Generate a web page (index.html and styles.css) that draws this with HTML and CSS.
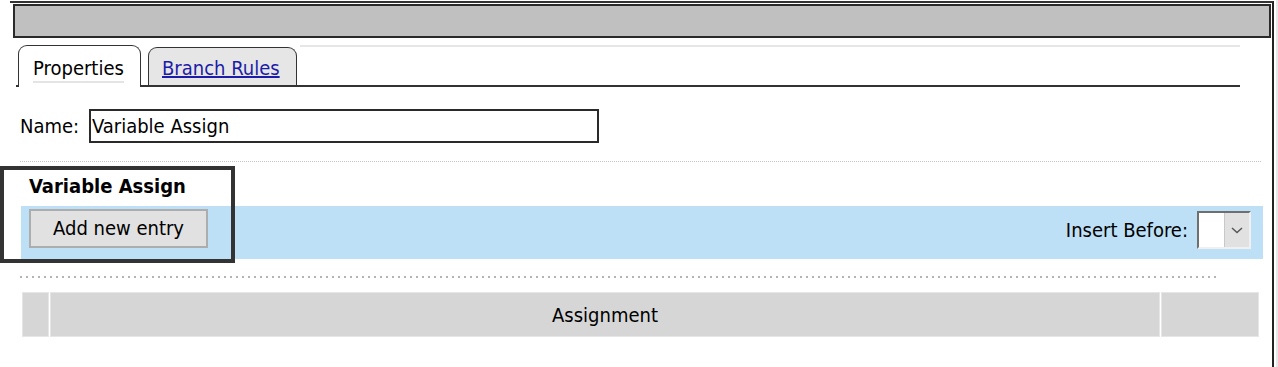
FILE: index.html
```html
<!DOCTYPE html>
<html>
<head>
<meta charset="utf-8">
<link rel="stylesheet" href="styles.css">
</head>
<body>
<div class="page">
  <div class="titlebar"></div>
  <div class="content">
    <div class="tabs">
      <div class="tab active"><span class="tab-label">Properties</span></div>
      <div class="tab"><a class="tab-link" href="#">Branch Rules</a></div>
      <div class="tab-fill"></div>
    </div>
    <div class="name-row">
      <label class="name-label">Name:</label>
      <div class="name-input">Variable Assign</div>
    </div>
    <div class="sep-fine"></div>
    <div class="section-title">Variable Assign</div>
    <div class="toolbar">
      <div class="btn">Add new entry</div>
      <div class="toolbar-right">
        <span class="insert-label">Insert Before:</span>
        <div class="select">
          <div class="select-value"></div>
          <div class="select-btn">
            <svg width="14" height="10" viewBox="0 0 14 10"><path d="M2 3 L7 7.5 L12 3" fill="none" stroke="#555" stroke-width="1.4"/></svg>
          </div>
        </div>
      </div>
    </div>
    <div class="sep-dots"></div>
    <div class="grid-head">
      <div class="cell c1"></div>
      <div class="cell c2">Assignment</div>
      <div class="cell c3"></div>
    </div>
  </div>
  <div class="highlight"></div>
</div>
<div class="edge"></div>
</body>
</html>
```
FILE: styles.css
```css
html, body {
  margin: 0;
  padding: 0;
  background: #fff;
  width: 1278px;
  height: 367px;
  overflow: hidden;
}
body {
  font-family: "DejaVu Sans Condensed", "DejaVu Sans", sans-serif;
  font-size: 20px;
  color: #000;
  position: relative;
}
.page {
  margin: 1px 0 0 10px;
  width: 1264px;
  height: 366px;
  border-top: 2px solid #333;
  border-right: 2px solid #222;
  box-sizing: border-box;
}
.titlebar {
  margin: 1px 1px 0 3px;
  height: 34px;
  background: #c0c0c0;
  border: 2px solid #2a2a2a;
  box-sizing: border-box;
}
.content {
  padding-left: 10px;
}
.tabs {
  display: flex;
  align-items: flex-end;
  margin-top: 7px;
  margin-left: -4px;
  width: 1224px;
  height: 40px;
  border-bottom: 2px solid #333;
}
.tab {
  height: 38px;
  box-sizing: border-box;
  border: 1.5px solid #333;
  border-bottom: none;
  border-radius: 9px 9px 0 0;
  background: #e6e6e6;
  display: flex;
  align-items: center;
  padding: 2px 16px 0 13px;
  margin-right: 7px;
}
.tab.active {
  margin-left: 2px;
  height: 42px;
  margin-bottom: -2px;
  background: #fff;
  padding: 0 4px 0 14px;
  width: 123px;
}
.tab-label {
  border-bottom: 2px solid #e4e4e4;
  line-height: 26px;
  padding-top: 4px;
}
.tab-link {
  color: #1c1ca8;
  text-decoration: underline;
}
.tab-fill {
  flex: 1;
  align-self: flex-start;
  border-top: 2px solid #e6e6e6;
  margin-left: -4px;
}
.name-row {
  display: flex;
  align-items: center;
  margin-top: 22px;
  height: 34px;
}
.name-label {
  width: 69px;
  flex: none;
}
.name-input {
  width: 510px;
  height: 34px;
  box-sizing: border-box;
  border: 2px solid #2a2a2a;
  padding-left: 1px;
  line-height: 30px;
}
.sep-fine {
  margin-top: 18px;
  width: 1241px;
  border-top: 1px dotted #c4c4c4;
}
.section-title {
  font-weight: bold;
  padding-left: 9px;
  height: 44px;
  line-height: 48px;
}
.toolbar {
  margin-left: 1px;
  width: 1242px;
  height: 53px;
  background: #bde0f6;
  display: flex;
  align-items: flex-start;
  justify-content: space-between;
  box-sizing: border-box;
  padding: 3px 12px 0 8px;
}
.btn {
  width: 179px;
  height: 39px;
  box-sizing: border-box;
  background: #e1e1e1;
  border: 2px solid #adadad;
  text-align: center;
  line-height: 35px;
}
.toolbar-right {
  display: flex;
  align-items: center;
  margin-top: 2px;
}
.insert-label {
  margin-right: 9px;
}
.select {
  display: flex;
  width: 54px;
  height: 38px;
  box-sizing: border-box;
  border-top: 2px solid #6f6f6f;
  border-left: 2px solid #6f6f6f;
  border-right: 2px solid #f0f0f0;
  border-bottom: 2px solid #f0f0f0;
  background: #fff;
}
.select-value {
  flex: 1;
}
.select-btn {
  width: 24px;
  background: #e1e1e1;
  border-left: 1px solid #c8c8c8;
  display: flex;
  align-items: center;
  justify-content: center;
}
.sep-dots {
  margin-top: 17px;
  width: 1197px;
  height: 2px;
  background-image: linear-gradient(to right, #b4b4b4 0 2px, transparent 2px 6px);
  background-size: 6px 2px;
}
.grid-head {
  display: flex;
  margin-top: 14px;
  margin-left: 2px;
  width: 1237px;
  height: 45px;
  gap: 1px;
}
.cell {
  background: #d6d6d6;
  border: 1px solid #e6e6e6;
  box-sizing: border-box;
  display: flex;
  align-items: center;
  justify-content: center;
}
.c1 { width: 27px; }
.c2 { flex: 1; }
.c3 { width: 98px; }
.highlight {
  position: absolute;
  left: 0;
  top: 166px;
  width: 235px;
  height: 97px;
  box-sizing: border-box;
  border: 4px solid #333;
}
.edge {
  position: absolute;
  left: 1276px;
  top: 0;
  width: 2px;
  height: 367px;
  background: #e8e8e8;
}
```
